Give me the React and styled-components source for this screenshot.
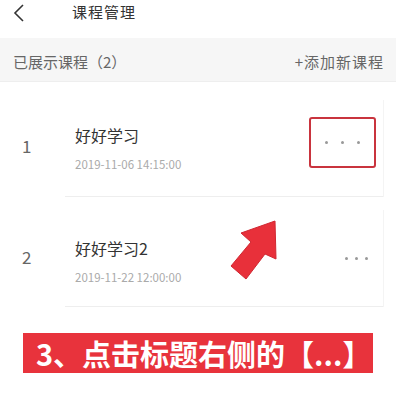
import React from 'react';
import styled, { createGlobalStyle } from 'styled-components';

const Global = createGlobalStyle`
  body {
    margin: 0;
    background: #ffffff;
    font-family: "Noto Sans CJK SC", "Noto Sans", sans-serif;
  }
`

const Page = styled.div`
  width: 396px;
  height: 404px;
  position: relative;
  overflow: hidden;
  background: #fff;
`

const Header = styled.header`
  height: 38px;
  display: flex;
  align-items: center;
  padding: 0 0 12px 12px;
  box-sizing: border-box;
  gap: 46px;
  color: #333;
  font-size: 15px;
  letter-spacing: 1px;
`

const HeaderTitle = styled.span`
  margin-bottom: 3px;
`

const SubBar = styled.section`
  height: 44px;
  background: #f6f6f6;
  border-bottom: 1px solid #eeeeee;
  display: flex;
  align-items: center;
  justify-content: space-between;
  padding: 4px 12px 0 13px;
  box-sizing: border-box;
  font-size: 15px;
  color: #666;
`

const AddLink = styled.span`
  color: #666;
  letter-spacing: 1px;
`

const List = styled.div`
  display: flex;
  flex-direction: column;
  gap: 13px;
  padding: 18px 13px 0 0;
`

const Row = styled.div`
  display: flex;
  align-items: stretch;
  height: 97px;
`

const Num = styled.div`
  width: 65px;
  display: flex;
  align-items: center;
  padding-left: 22px;
  padding-bottom: ${p => p.lift}px;
  box-sizing: border-box;
  font-size: 17px;
  color: #666;
`

const Card = styled.div`
  flex: 1;
  display: flex;
  align-items: center;
  justify-content: space-between;
  border-bottom: 1px solid #eeeeee;
  box-shadow: 1px 0 0 #f4f4f4;
  padding: 0 7px 0 10px;
  box-sizing: border-box;
`

const Info = styled.div`
  display: flex;
  flex-direction: column;
  gap: 12px;
  padding-top: ${p => p.off}px;
`

const Title = styled.div`
  font-size: 16px;
  color: #333;
  line-height: 20px;
`

const Date = styled.div`
  font-size: 11.5px;
  color: #aaa;
  line-height: 14px;
`

const More = styled.div`
  display: flex;
  align-items: center;
  justify-content: center;
  gap: ${p => p.gap}px;
  width: ${p => p.w}px;
  height: 51px;
  box-sizing: border-box;
  border: ${p => (p.boxed ? '2.5px solid #c9343e' : 'none')};
  border-radius: 3px;
  margin-top: ${p => p.off}px;
  span {
    width: 3px;
    height: 3px;
    border-radius: 50%;
    background: #999;
  }
`

const Arrow = styled.svg`
  position: absolute;
  left: 0;
  top: 0;
  pointer-events: none;
`

const Banner = styled.div`
  position: absolute;
  left: 23px;
  top: 333px;
  width: 350px;
  height: 40px;
  background: #e8333c;
  color: #fff;
  font-weight: 700;
  font-size: 29px;
  line-height: 40px;
  display: flex;
  align-items: center;
  padding-left: 13px;
  box-sizing: border-box;
  white-space: nowrap;
`

const courses = [
  { n: 1, title: '好好学习', date: '2019-11-06 14:15:00', boxed: true },
  { n: 2, title: '好好学习2', date: '2019-11-22 12:00:00', boxed: false }
]

export default function App() {
  return (
    <Page>
      <Global />
      <Header>
        <svg width="14" height="20" viewBox="0 0 14 20">
          <path d="M11 2 L3 10 L11 18" fill="none" stroke="#333" strokeWidth="1.6" />
        </svg>
        <HeaderTitle>课程管理</HeaderTitle>
      </Header>
      <SubBar>
        <span>已展示课程（2）</span>
        <AddLink>+添加新课程</AddLink>
      </SubBar>
      <List>
        {courses.map(c => (
          <Row key={c.n}>
            <Num lift={c.boxed ? 7 : 5}>{c.n}</Num>
            <Card>
              <Info off={c.boxed ? 0 : 6}>
                <Title>{c.title}</Title>
                <Date>{c.date}</Date>
              </Info>
              <More
                boxed={c.boxed}
                w={c.boxed ? 67 : 40}
                gap={c.boxed ? 13 : 7}
                off={c.boxed ? -12 : 1}
              >
                <span /><span /><span />
              </More>
            </Card>
          </Row>
        ))}
      </List>
      <Arrow width="396" height="404" viewBox="0 0 396 404">
        <polygon
          points="275,221 241,233 251,242 231,266 246,279 265,254 276,259"
          fill="#e8303a"
          stroke="#d02832"
          strokeWidth="1"
          strokeLinejoin="round"
        />
      </Arrow>
      <Banner>3、点击标题右侧的【...】</Banner>
    </Page>
  );
}
